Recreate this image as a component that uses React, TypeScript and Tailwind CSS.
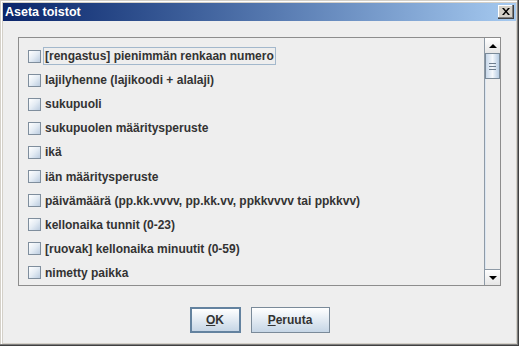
import { useState } from "react";

const ITEMS = [
  "[rengastus] pienimmän renkaan numero",
  "lajilyhenne (lajikoodi + alalaji)",
  "sukupuoli",
  "sukupuolen määritysperuste",
  "ikä",
  "iän määritysperuste",
  "päivämäärä (pp.kk.vvvv, pp.kk.vv, ppkkvvvv tai ppkkvv)",
  "kellonaika tunnit (0-23)",
  "[ruovak] kellonaika minuutit (0-59)",
  "nimetty paikka",
];

function CheckBox({ checked }: { checked: boolean }) {
  return (
    <div className="w-[13px] h-[13px] shrink-0 border border-[#7f8e9d] bg-gradient-to-br from-white via-[#e4ecf4] to-[#bccde0] flex items-center justify-center">
      {checked && <span className="text-[10px] leading-none text-[#333]">✓</span>}
    </div>
  );
}

function ScrollBar() {
  return (
    <div className="w-[16px] shrink-0 flex flex-col border-l border-[#8e9aa6] bg-[#eeeeee]">
      {/* up arrow */}
      <div className="h-[15px] flex items-center justify-center bg-gradient-to-b from-white to-[#e6e6e6]">
        <div className="w-0 h-0 border-l-[4px] border-r-[4px] border-b-[4px] border-l-transparent border-r-transparent border-b-black" />
      </div>
      {/* thumb */}
      <div className="h-[26px] border border-[#7a8a99] bg-gradient-to-r from-[#c8d8ea] via-[#f4f8fc] to-[#b6cce3] flex flex-col items-center justify-center gap-[2px]">
        <div className="w-[7px] h-px bg-[#6e7e8f]" />
        <div className="w-[7px] h-px bg-[#6e7e8f]" />
        <div className="w-[7px] h-px bg-[#6e7e8f]" />
      </div>
      <div className="flex-1 border-l border-[#dbe6f2]" />
      {/* down arrow */}
      <div className="h-[16px] flex items-center justify-center border-t border-[#8e9aa6] bg-gradient-to-b from-white to-[#e6e6e6]">
        <div className="w-0 h-0 border-l-[4px] border-r-[4px] border-t-[4px] border-l-transparent border-r-transparent border-t-black" />
      </div>
    </div>
  );
}

export default function App() {
  const [checked] = useState<boolean[]>(ITEMS.map(() => false));

  return (
    <div className="w-[519px] h-[346px] flex flex-col p-[3px] bg-[#d4d0c8] shadow-[inset_-1px_-1px_#404040,inset_-2px_-2px_#808080,inset_1px_1px_#d4d0c8,inset_2px_2px_#ffffff] font-['Liberation_Sans',Arial,sans-serif]">
      {/* Title bar */}
      <div className="h-[18px] shrink-0 flex items-center justify-between pl-[2px] pr-[2px] bg-gradient-to-r from-[#0a246a] to-[#a6caf0]">
        <span className="text-white font-bold text-[12.5px] leading-none">Aseta toistot</span>
        <div className="w-[16px] h-[14px] bg-[#d4d0c8] shadow-[inset_-1px_-1px_#404040,inset_-2px_-2px_#808080,inset_1px_1px_#ffffff] flex items-center justify-center">
          <svg width="8" height="7" viewBox="0 0 8 7" className="-mt-px">
            <path d="M0 0h2l2 2.5L6 0h2L5 3.5 8 7H6L4 4.5 2 7H0l3-3.5z" fill="#000" />
          </svg>
        </div>
      </div>

      {/* Body */}
      <div className="flex-1 flex flex-col bg-[#eeeeee]">
        <div className="mt-[16px] ml-[15px] w-[483px] h-[249px] flex border border-[#8d8d8d]">
          <div className="flex-1 overflow-hidden pt-[6px]">
            {ITEMS.map((label, i) => (
              <div key={label} className="h-[24.1px] flex items-center pl-[9px] gap-[2px]">
                <CheckBox checked={checked[i]} />
                <span
                  className={`border px-[1px] py-[1px] text-[12px] leading-[14px] font-bold text-[#333333] whitespace-nowrap ${
                    i === 0 ? "border-[#a3b8cc]" : "border-transparent"
                  }`}
                >
                  {label}
                </span>
              </div>
            ))}
          </div>
          <ScrollBar />
        </div>

        <div className="mt-[21px] flex justify-center gap-[10px]">
          <button className="w-[51px] h-[26px] border-2 border-[#63829f] bg-gradient-to-b from-white to-[#c6d6e6] text-[12px] font-bold text-[#333333]">
            <span className="underline underline-offset-1">O</span>K
          </button>
          <button className="w-[79px] h-[26px] border border-[#7a8a99] bg-gradient-to-b from-white to-[#c6d6e6] text-[12px] font-bold text-[#333333]">
            <span className="underline underline-offset-1">P</span>eruuta
          </button>
        </div>
      </div>
    </div>
  );
}
